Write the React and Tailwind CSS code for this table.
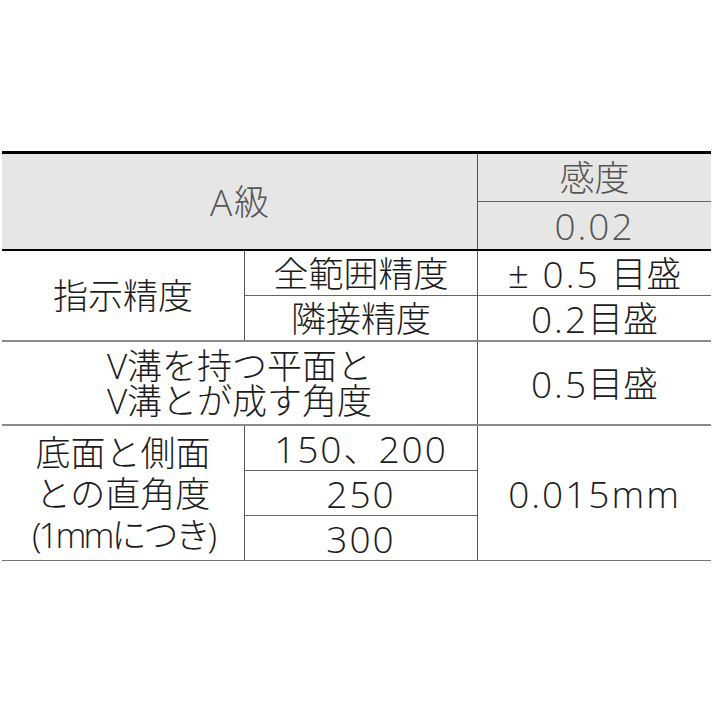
export default function App() {
  const font = { fontFamily: '"Open Sans", "Noto Sans CJK JP", sans-serif' };
  const L = ({ children }) => <span className="text-[37px] tracking-[2px]">{children}</span>;
  return (
    <div className="w-[713px] h-[713px] bg-white pt-[151px] px-[2px] font-light" style={font}>
      <div className="w-[709px] border-t-[3px] border-black text-[#1c1c1c] text-[35px] leading-none">
        {/* header */}
        <div className="grid grid-cols-[476px_1fr] bg-[#e6e6e6] text-[#555] border-b-2 border-black">
          <div className="h-[95px] flex items-center justify-center border-r border-[#555]"><L>A</L>級</div>
          <div className="flex flex-col">
            <div className="h-[48px] flex items-center justify-center border-b border-[#666]">感度</div>
            <div className="h-[46px] flex items-center justify-center"><L>0.02</L></div>
          </div>
        </div>

        {/* 指示精度 */}
        <div className="grid grid-cols-[243px_233px_1fr] border-b-2 border-[#8a8a8a]">
          <div className="flex items-center justify-center border-r border-[#555]">指示精度</div>
          <div className="flex flex-col border-r border-[#555]">
            <div className="h-[45px] flex items-center justify-center border-b border-[#666]">全範囲精度</div>
            <div className="h-[44px] flex items-center justify-center">隣接精度</div>
          </div>
          <div className="flex flex-col">
            <div className="h-[45px] flex items-center justify-center border-b border-[#666] whitespace-pre"><L>± 0.5 </L>目盛</div>
            <div className="h-[44px] flex items-center justify-center"><L>0.2</L>目盛</div>
          </div>
        </div>

        {/* V溝 */}
        <div className="grid grid-cols-[476px_1fr] border-b-2 border-[#8a8a8a]">
          <div className="h-[82px] flex flex-col items-center justify-center border-r border-[#555] leading-[35px]">
            <span>V溝を持つ平面と</span>
            <span>V溝とが成す角度</span>
          </div>
          <div className="flex items-center justify-center"><L>0.5</L>目盛</div>
        </div>

        {/* 直角度 */}
        <div className="grid grid-cols-[243px_233px_1fr] border-b border-[#777]">
          <div className="flex flex-col items-center justify-center border-r border-[#555] leading-[41px]">
            <span>底面と側面</span>
            <span>との直角度</span>
            <span className="tracking-[-3px]">(1mmにつき)</span>
          </div>
          <div className="flex flex-col border-r border-[#555]">
            <div className="h-[45px] flex items-center justify-center border-b border-[#666]"><L>150</L>、<L>200</L></div>
            <div className="h-[45px] flex items-center justify-center border-b border-[#666]"><L>250</L></div>
            <div className="h-[44px] flex items-center justify-center"><L>300</L></div>
          </div>
          <div className="flex items-center justify-center"><L>0.015mm</L></div>
        </div>
      </div>
    </div>
  );
}
